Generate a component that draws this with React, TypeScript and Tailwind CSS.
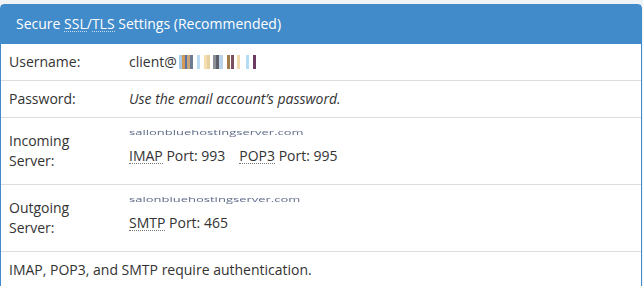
import React from 'react';

const font = { fontFamily: '"Open Sans", "Liberation Sans", sans-serif' };

// pixel-mosaic stand-in for the obscured part of the address
const bars: [string, number][] = [
    ['#a9cde9', 3], ['#d49a55', 3], ['#5571a8', 2], ['#c9a57a', 3], ['#6d7a93', 3], ['#ffffff', 4],
    ['#b9dcf2', 3], ['#ffffff', 4], ['#f5deb0', 3], ['#e8cfa0', 3], ['#ffffff', 3], ['#8a8f99', 3],
    ['#5c5f6a', 3], ['#b9d3ea', 4], ['#ffffff', 4], ['#a27c4b', 3], ['#ffffff', 1], ['#7b4f5e', 3],
    ['#ffffff', 3], ['#f2d9ad', 3], ['#ffffff', 6], ['#b3dcf5', 3], ['#ffffff', 4], ['#6e3c63', 3],
];

const Abbr: React.FC<{ children: React.ReactNode; light?: boolean }> = ({ children, light }) => (
    <span className={`border-b border-dotted ${light ? 'border-white/70' : 'border-[#777]'} leading-[14px] inline-block`}>
        {children}
    </span>
);

const Host: React.FC<{ text: string }> = ({ text }) => (
    <div className="h-5 pt-[3px]">
        <span className="block origin-top scale-y-[0.5] text-[13px] leading-[13px] text-[#5f6b88] blur-[0.5px]">{text}</span>
    </div>
);

export default function App() {
    return (
        <div className="min-h-[286px] bg-[#f1f4f7] pt-1 pr-px text-[14px] text-[#333] overflow-hidden" style={font}>
            <div className="bg-white border border-[#428bca] rounded-t-[4px]">
                <div className="bg-[#428bca] text-white px-[15px] pt-[9px] pb-[10px] leading-5">
                    Secure <Abbr light>SSL</Abbr>/<Abbr light>TLS</Abbr> Settings (Recommended)
                </div>
                <div className="flex">
                    <div className="w-[120px] p-2 leading-5">Username:</div>
                    <div className="p-2 leading-5 flex items-center">
                        client@
                        <span className="flex h-[14px] ml-[2px]">
                            {bars.map(([c, w], i) => (
                                <span key={i} className="h-full" style={{ backgroundColor: c, width: w }} />
                            ))}
                        </span>
                    </div>
                </div>
                <div className="flex border-t border-[#ddd]">
                    <div className="w-[120px] p-2 leading-5">Password:</div>
                    <div className="p-2 leading-5 italic">Use the email account’s password.</div>
                </div>
                <div className="flex border-t border-[#ddd]">
                    <div className="w-[120px] p-2 leading-5 self-center">Incoming<br />Server:</div>
                    <div className="p-2 leading-5">
                        <Host text="sallonbluehostingserver.com" />
                        <p className="mb-[10px]">
                            <Abbr>IMAP</Abbr> Port: 993<span className="inline-block w-[14px]" />
                            <Abbr>POP3</Abbr> Port: 995
                        </p>
                    </div>
                </div>
                <div className="flex border-t border-[#ddd]">
                    <div className="w-[120px] p-2 leading-5 self-center">Outgoing<br />Server:</div>
                    <div className="p-2 leading-5">
                        <Host text="salonbluehostingserver.com" />
                        <p className="mb-[10px]">
                            <Abbr>SMTP</Abbr> Port: 465
                        </p>
                    </div>
                </div>
                <div className="border-t border-[#ddd] p-2 leading-5">
                    IMAP, POP3, and SMTP require authentication.
                </div>
            </div>
        </div>
    );
}
